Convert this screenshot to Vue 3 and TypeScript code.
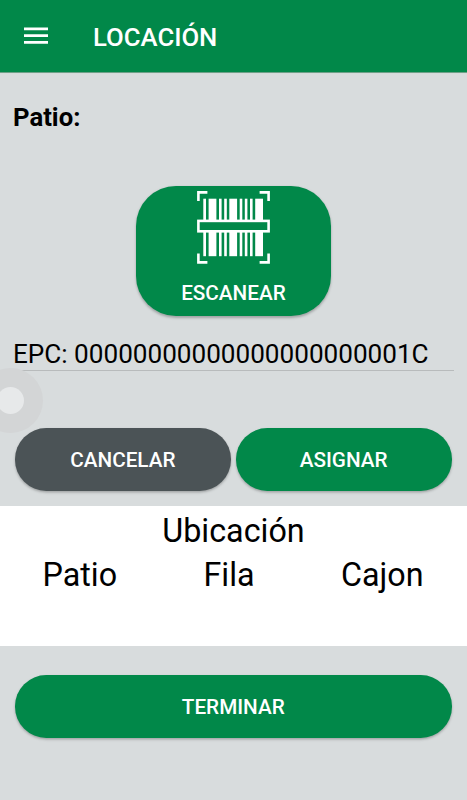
<script setup lang="ts">
interface Bar {
  x: number
  w: number
}

const epc = '0'.repeat(22) + '1C'
const columns: string[] = ['Patio', 'Fila', 'Cajon']
const bars: Bar[] = [
  { x: 6.3, w: 2.7 },
  { x: 11.6, w: 7.8 },
  { x: 22, w: 2.6 },
  { x: 27.2, w: 2.6 },
  { x: 32.3, w: 7.8 },
  { x: 42.7, w: 2.6 },
  { x: 47.8, w: 2.6 },
  { x: 53, w: 2.6 },
  { x: 58.2, w: 7.8 },
]
</script>

<template>
  <div class="screen">
    <header class="toolbar">
      <svg class="menu" width="24" height="18" viewBox="0 0 24 18">
        <path d="M0 .4h24v2.8H0zM0 7.2h24V10H0zM0 14h24v2.8H0z" fill="#fff" />
      </svg>
      <h1 class="title">LOCACIÓN</h1>
    </header>

    <main>
      <div class="patio">Patio:</div>

      <button class="btn scan">
        <svg width="73" height="73" viewBox="0 0 73 73">
          <g fill="#fff">
            <rect v-for="bar in bars" :key="bar.x" :x="bar.x" y="7.7" :width="bar.w" height="57.5" />
          </g>
          <rect x="1.4" y="29.9" width="70.2" height="10.4" fill="#018849" stroke="#fff" stroke-width="2.6" />
          <path
            d="M1.4 10V1.4h9M62.6 1.4h9V10M1.4 62.6v8.8h9M62.6 71.4h9v-8.8"
            fill="none"
            stroke="#fff"
            stroke-width="2.6"
          />
        </svg>
        <span>ESCANEAR</span>
      </button>

      <div class="epc">EPC: {{ epc }}</div>

      <div class="actions">
        <button class="btn pill cancel">CANCELAR</button>
        <button class="btn pill">ASIGNAR</button>
      </div>

      <section class="location">
        <div class="heading">Ubicación</div>
        <div class="columns">
          <span v-for="column in columns" :key="column">{{ column }}</span>
        </div>
      </section>

      <div class="finish">
        <button class="btn pill">TERMINAR</button>
      </div>
    </main>

    <div class="assist"><i></i></div>
  </div>
</template>

<style>
body {
  margin: 0;
  background: #d8dcdd;
}
</style>

<style scoped>
.screen {
  position: relative;
  box-sizing: border-box;
  width: 467px;
  height: 800px;
  overflow: hidden;
  background: #d8dcdd;
  color: #000;
  font-family: Roboto, sans-serif;
}
.toolbar {
  display: flex;
  align-items: center;
  box-sizing: border-box;
  height: 72px;
  padding-left: 24px;
  background: #018849;
  box-shadow: 0 0.5px 0.5px rgba(1, 100, 50, 0.5);
}
.menu {
  display: block;
}
.title {
  margin: 1px 0 0 45px;
  color: #fff;
  font-size: 25.7px;
  font-weight: 500;
  line-height: 32px;
}
.patio {
  height: 113.5px;
  padding: 30px 0 0 13px;
  box-sizing: border-box;
  font-size: 25.7px;
  font-weight: 700;
  line-height: 30px;
}
.btn {
  display: flex;
  align-items: center;
  justify-content: center;
  box-sizing: border-box;
  margin: 0;
  padding: 0;
  border: 0;
  background: #018849;
  box-shadow: 0 1.5px 2.5px rgba(0, 0, 0, 0.26);
  color: #fff;
  font-family: inherit;
  font-size: 20.7px;
  font-weight: 500;
  line-height: 26px;
}
.scan {
  flex-direction: column;
  justify-content: flex-start;
  width: 194.5px;
  height: 130px;
  margin-left: 136.2px;
  padding-top: 5.5px;
  border-radius: 40px;
}
.scan svg {
  flex: none;
}
.scan span {
  margin-top: 16px;
}
.epc {
  box-sizing: border-box;
  height: 32px;
  margin: 23px 13px 0;
  border-bottom: 1px solid #b8bbbc;
  font-size: 26.12px;
  line-height: 30px;
  white-space: nowrap;
}
.actions {
  display: flex;
  gap: 5px;
  padding: 57.5px 15.5px 0 15px;
}
.pill {
  flex: 1;
  height: 62.5px;
  padding-top: 1px;
  border-radius: 31.25px;
}
.actions .pill {
  padding-top: 2px;
}
.cancel {
  background: #4b5356;
}
.location {
  box-sizing: border-box;
  height: 140px;
  margin-top: 15.5px;
  padding-top: 3px;
  background: #fff;
  font-size: 32.3px;
  line-height: 44px;
  text-align: center;
}
.columns {
  display: flex;
  justify-content: space-between;
  padding: 0 43.5px 0 42.5px;
}
.finish {
  display: flex;
  padding: 29px 15.5px 0 15px;
}
.assist {
  position: absolute;
  top: 367.5px;
  left: -22px;
  display: flex;
  align-items: center;
  justify-content: center;
  width: 65px;
  height: 65px;
  border-radius: 50%;
  background: #d3d5d6;
}
.assist i {
  width: 27px;
  height: 27px;
  border-radius: 50%;
  background: #e7e9ea;
}
</style>
